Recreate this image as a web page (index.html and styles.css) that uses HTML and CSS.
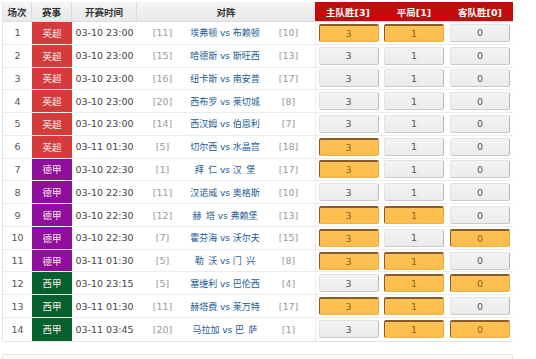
FILE: index.html
```html
<!DOCTYPE html>
<html lang="zh-CN">
<head>
<meta charset="utf-8">
<title>胜平负投注</title>
<link rel="stylesheet" href="styles.css">
</head>
<body>
<div class="board">
  <div class="head">
    <div class="hc">场次</div>
    <div class="hc">赛事</div>
    <div class="hc">开赛时间</div>
    <div class="hc span3">对阵</div>
    <div class="hc red">主队胜[3]</div>
    <div class="hc red">平局[1]</div>
    <div class="hc red">客队胜[0]</div>
  </div>

  <div class="row"><div class="no">1</div><div class="lg epl">英超</div><div class="tm">03-10 23:00</div><div class="rk">[11]</div><div class="vs">埃弗顿 vs 布赖顿</div><div class="rk">[10]</div><div class="bc first"><span class="btn on">3</span></div><div class="bc"><span class="btn on">1</span></div><div class="bc"><span class="btn">0</span></div></div>
  <div class="row"><div class="no">2</div><div class="lg epl">英超</div><div class="tm">03-10 23:00</div><div class="rk">[15]</div><div class="vs">哈德斯 vs 斯旺西</div><div class="rk">[13]</div><div class="bc first"><span class="btn">3</span></div><div class="bc"><span class="btn">1</span></div><div class="bc"><span class="btn">0</span></div></div>
  <div class="row"><div class="no">3</div><div class="lg epl">英超</div><div class="tm">03-10 23:00</div><div class="rk">[16]</div><div class="vs">纽卡斯 vs 南安普</div><div class="rk">[17]</div><div class="bc first"><span class="btn">3</span></div><div class="bc"><span class="btn">1</span></div><div class="bc"><span class="btn">0</span></div></div>
  <div class="row"><div class="no">4</div><div class="lg epl">英超</div><div class="tm">03-10 23:00</div><div class="rk">[20]</div><div class="vs">西布罗 vs 莱切城</div><div class="rk">[8]</div><div class="bc first"><span class="btn">3</span></div><div class="bc"><span class="btn">1</span></div><div class="bc"><span class="btn">0</span></div></div>
  <div class="row"><div class="no">5</div><div class="lg epl">英超</div><div class="tm">03-10 23:00</div><div class="rk">[14]</div><div class="vs">西汉姆 vs 伯恩利</div><div class="rk">[7]</div><div class="bc first"><span class="btn">3</span></div><div class="bc"><span class="btn">1</span></div><div class="bc"><span class="btn">0</span></div></div>
  <div class="row"><div class="no">6</div><div class="lg epl">英超</div><div class="tm">03-11 01:30</div><div class="rk">[5]</div><div class="vs">切尔西 vs 水晶宫</div><div class="rk">[18]</div><div class="bc first"><span class="btn on">3</span></div><div class="bc"><span class="btn">1</span></div><div class="bc"><span class="btn">0</span></div></div>
  <div class="row"><div class="no">7</div><div class="lg bun">德甲</div><div class="tm">03-10 22:30</div><div class="rk">[1]</div><div class="vs">拜&ensp;仁 vs 汉&ensp;堡</div><div class="rk">[17]</div><div class="bc first"><span class="btn on">3</span></div><div class="bc"><span class="btn">1</span></div><div class="bc"><span class="btn">0</span></div></div>
  <div class="row"><div class="no">8</div><div class="lg bun">德甲</div><div class="tm">03-10 22:30</div><div class="rk">[11]</div><div class="vs">汉诺威 vs 奥格斯</div><div class="rk">[10]</div><div class="bc first"><span class="btn">3</span></div><div class="bc"><span class="btn">1</span></div><div class="bc"><span class="btn">0</span></div></div>
  <div class="row"><div class="no">9</div><div class="lg bun">德甲</div><div class="tm">03-10 22:30</div><div class="rk">[12]</div><div class="vs">赫&ensp;塔 vs 弗赖堡</div><div class="rk">[13]</div><div class="bc first"><span class="btn on">3</span></div><div class="bc"><span class="btn on">1</span></div><div class="bc"><span class="btn">0</span></div></div>
  <div class="row"><div class="no">10</div><div class="lg bun">德甲</div><div class="tm">03-10 22:30</div><div class="rk">[7]</div><div class="vs">霍芬海 vs 沃尔夫</div><div class="rk">[15]</div><div class="bc first"><span class="btn on">3</span></div><div class="bc"><span class="btn">1</span></div><div class="bc"><span class="btn on">0</span></div></div>
  <div class="row"><div class="no">11</div><div class="lg bun">德甲</div><div class="tm">03-11 01:30</div><div class="rk">[5]</div><div class="vs">勒&ensp;沃 vs 门&ensp;兴</div><div class="rk">[8]</div><div class="bc first"><span class="btn on">3</span></div><div class="bc"><span class="btn on">1</span></div><div class="bc"><span class="btn">0</span></div></div>
  <div class="row"><div class="no">12</div><div class="lg liga">西甲</div><div class="tm">03-10 23:15</div><div class="rk">[5]</div><div class="vs">塞维利 vs 巴伦西</div><div class="rk">[4]</div><div class="bc first"><span class="btn">3</span></div><div class="bc"><span class="btn on">1</span></div><div class="bc"><span class="btn on">0</span></div></div>
  <div class="row"><div class="no">13</div><div class="lg liga">西甲</div><div class="tm">03-11 01:30</div><div class="rk">[11]</div><div class="vs">赫塔费 vs 莱万特</div><div class="rk">[17]</div><div class="bc first"><span class="btn on">3</span></div><div class="bc"><span class="btn on">1</span></div><div class="bc"><span class="btn">0</span></div></div>
  <div class="row"><div class="no">14</div><div class="lg liga">西甲</div><div class="tm">03-11 03:45</div><div class="rk">[20]</div><div class="vs">马拉加 vs 巴&ensp;萨</div><div class="rk">[1]</div><div class="bc first"><span class="btn">3</span></div><div class="bc"><span class="btn on">1</span></div><div class="bc"><span class="btn on">0</span></div></div>
</div>
<div class="next"></div>
</body>
</html>
```

FILE: styles.css
```css
html, body {
  margin: 0;
  padding: 0;
  background: #ffffff;
}
body {
  padding: 2px 0 0 2px;
  font-family: "DejaVu Sans", "Noto Sans CJK SC", sans-serif;
  font-size: 9.5px;
  color: #333;
}
.board {
  width: 511px;
  box-sizing: border-box;
  border-left: 1px solid #e2e2e2;
  border-bottom: 1px solid #e6e6e6;
}
.head, .row {
  display: grid;
  grid-template-columns: 29px 40px 65px 51px 74px 53px 66px 66px 66px;
}
.head {
  height: 19px;
  border-bottom: 1px solid #dedede;
}
.hc {
  display: flex;
  align-items: center;
  justify-content: center;
  background: linear-gradient(#f4f4f4, #e9e9e9);
  border-right: 1px solid #dcdcdc;
  font-weight: bold;
  color: #333;
}
.hc.span3 {
  grid-column: span 3;
  border-right: none;
}
.hc.red {
  background: #c50a0b;
  color: #fff;
  border-right: none;
}
.row {
  height: 22.77px;
  box-sizing: border-box;
  border-bottom: 1px solid #ececec;
}
.row:last-child {
  border-bottom: none;
}
.row > div {
  display: flex;
  align-items: center;
  justify-content: center;
}
.no {
  color: #555;
}
.lg {
  color: #fbeaea;
}
.epl { background: #d63b3b; }
.bun { background: #8f0f9c; }
.liga { background: #07612f; }
.tm {
  color: #444;
}
.rk {
  color: #9a9a9a;
}
.vs {
  color: #1b5c95;
  font-size: 9px;
  white-space: nowrap;
}
.bc.first {
  border-left: 1px solid #ececec;
}
.btn {
  width: 60px;
  height: 18px;
  box-sizing: border-box;
  display: flex;
  align-items: center;
  justify-content: center;
  background: linear-gradient(#f3f3f3, #ebebeb);
  border: 1px solid #e3e3e3;
  border-right-color: #b8b8b8;
  border-bottom-color: #c9c9c9;
  border-radius: 2px;
  color: #555;
}
.btn.on {
  background: linear-gradient(#fdc256, #fbbd4a);
  border-top: 2px solid #8c5c26;
  border-left: 1px solid #8c5c26;
  border-right: 1px solid #e8a83c;
  border-bottom: 1px solid #eeb04a;
  color: #8a6524;
}
.next {
  margin-top: 12px;
  width: 511px;
  height: 40px;
  box-sizing: border-box;
  border: 1px solid #e6e6e6;
  background: #fdfdfd;
}
```
